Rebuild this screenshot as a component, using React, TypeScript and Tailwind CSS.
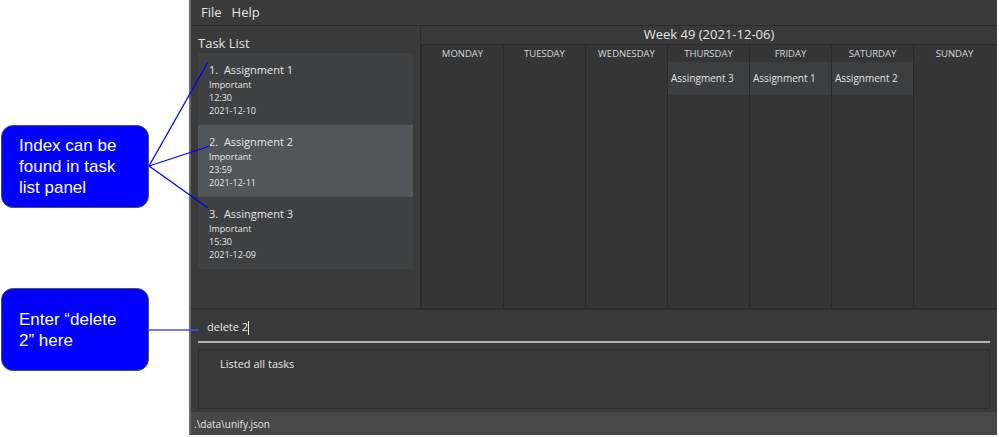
import React from 'react';

const tasks = [
  { idx: 1, name: 'Assignment 1', tag: 'Important', time: '12:30', date: '2021-12-10' },
  { idx: 2, name: 'Assignment 2', tag: 'Important', time: '23:59', date: '2021-12-11' },
  { idx: 3, name: 'Assingment 3', tag: 'Important', time: '15:30', date: '2021-12-09' },
];

const days = [
  { name: 'MONDAY', event: '' },
  { name: 'TUESDAY', event: '' },
  { name: 'WEDNESDAY', event: '' },
  { name: 'THURSDAY', event: 'Assingment 3' },
  { name: 'FRIDAY', event: 'Assignment 1' },
  { name: 'SATURDAY', event: 'Assignment 2' },
  { name: 'SUNDAY', event: '' },
];

const ui = { fontFamily: '"Open Sans", "Noto Sans", sans-serif' };
const arial = { fontFamily: '"Liberation Sans", Arial, sans-serif' };

function Callout({ lines }: { lines: string[] }) {
  return (
    <div
      className="w-[148px] h-[83px] rounded-[12px] bg-[#0000ff] border border-[#555] pl-[17px] flex flex-col justify-center text-white text-[17px] leading-[21px]"
      style={arial}
    >
      {lines.map((l) => (
        <div key={l}>{l}</div>
      ))}
    </div>
  );
}

export default function App() {
  return (
    <div className="relative w-[999px] h-[437px] bg-white flex overflow-hidden">
      <div className="w-[189px] shrink-0 pl-[1px]">
        <div className="mt-[125px]">
          <Callout lines={['Index can be', 'found in task', 'list panel']} />
        </div>
        <div className="mt-[80px]">
          <Callout lines={['Enter “delete', '2” here']} />
        </div>
      </div>

      <div className="w-[808px] h-[435px] border-l-2 border-[#6a6a6a] bg-[#3a3a3a] flex flex-col text-[#d6d6d6]" style={ui}>
        <div className="h-[26px] shrink-0 bg-[#3a3a3a] border-b border-[#2c2c2c] flex items-center gap-[10px] pl-[10px] text-[13px] text-[#e4e4e4]">
          <span>File</span>
          <span>Help</span>
        </div>

        <div className="flex h-[284px] shrink-0 border-b-2 border-[#2c2c2c]">
          <div className="w-[230px] shrink-0 px-[7px] flex flex-col border-r border-[#2c2c2c]">
            <div className="h-[27px] flex items-end text-[13px] text-[#e4e4e4]">Task List</div>
            <div className="flex flex-col">
              {tasks.map((t) => (
                <div
                  key={t.idx}
                  className={`h-[72px] pl-[11px] pt-[10px] ${t.idx === 2 ? 'bg-[#50565a]' : 'bg-[#3f4042]'}`}
                >
                  <div className="text-[11px] leading-[14px] text-[#e6e6e6]">
                    {t.idx}.&nbsp; {t.name}
                  </div>
                  <div className="mt-[1px] text-[9px] leading-[13px] text-[#e6e6e6]">
                    <div>{t.tag}</div>
                    <div>{t.time}</div>
                    <div>{t.date}</div>
                  </div>
                </div>
              ))}
            </div>
          </div>

          <div className="flex-1 flex flex-col bg-[#363636]">
            <div className="h-[19px] shrink-0 border-b border-[#2c2c2c] flex items-center justify-center text-[13px] text-[#e4e4e4] bg-[#393939]">
              Week 49 (2021-12-06)
            </div>
            <div className="flex-1 flex pr-[2px]">
              {days.map((d) => (
                <div key={d.name} className="flex-1 border-l border-[#2a2a2a] flex flex-col bg-[#353535]">
                  <div className="h-[17px] pt-[2px] flex items-center justify-center text-[9.5px] text-[#d2d6dc]">{d.name}</div>
                  {d.event && (
                    <div className="h-[33px] bg-[#3d3e40] flex items-center pl-[3px] text-[10px] text-[#e2e2e2]">
                      {d.event}
                    </div>
                  )}
                </div>
              ))}
            </div>
          </div>
        </div>

        <div className="h-[36px] shrink-0 px-[7px] flex flex-col justify-end pb-[3px]">
          <div className="h-[30px] border-b-2 border-[#b5b5b5] flex items-center pl-[9px] pt-[1px] text-[11px] text-[#e8e8e8]">
            <span>delete 2</span>
            <span className="w-px h-[14px] bg-[#e8e8e8]"></span>
          </div>
        </div>

        <div className="h-[66px] shrink-0 px-[7px] pt-[3px] pb-[3px]">
          <div className="h-full border border-[#2e2e2e] bg-[#383838] pl-[21px] pt-[6px] text-[11px] text-[#e8e8e8]">
            Listed all tasks
          </div>
        </div>

        <div className="flex-1 bg-[#474747] flex items-center pl-[3px] pt-[1px] text-[10px] text-[#e2e2e2]">
          .\data\unify.json
        </div>
      </div>

      <svg className="absolute inset-0 pointer-events-none" width="999" height="437">
        <line x1="149" y1="166" x2="208" y2="62" stroke="#0000ff" strokeWidth="1.3" />
        <line x1="149" y1="166" x2="210" y2="146" stroke="#0000ff" strokeWidth="1.3" />
        <line x1="149" y1="166" x2="208" y2="208" stroke="#0000ff" strokeWidth="1.3" />
        <line x1="149" y1="330" x2="199" y2="330" stroke="#4a4aff" strokeWidth="1.5" />
      </svg>
    </div>
  );
}
